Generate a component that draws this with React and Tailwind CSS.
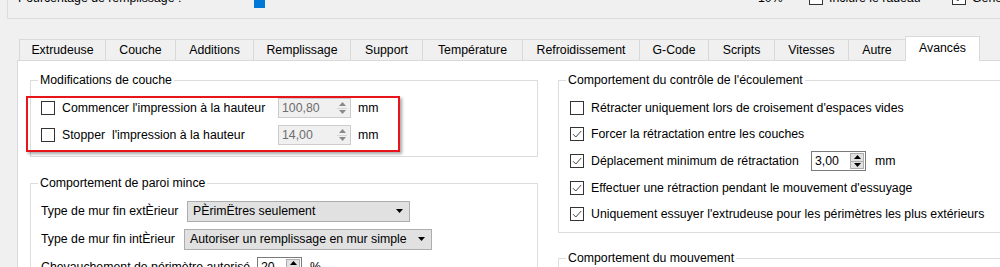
import React from "react";

function Check({ checked }) {
  return (
    <span className="w-[14px] h-[14px] border border-[#333333] bg-white flex items-center justify-center shrink-0">
      {checked && (
        <svg width="12" height="12" viewBox="0 0 12 12">
          <path d="M2 6.2 L4.8 9 L10.2 3" fill="none" stroke="#444444" strokeWidth="1" />
        </svg>
      )}
    </span>
  );
}

function Spin({ value, disabled, w }) {
  return (
    <div
      className={
        "h-[20px] flex border shrink-0 " +
        (disabled ? "border-[#cccccc] bg-[#f0f0f0] text-[#6d6d6d]" : "border-[#7a7a7a] bg-white text-black")
      }
      style={{ width: w }}
    >
      <div className="flex-1 flex items-center pl-[3px] leading-none">{value}</div>
      <div className="w-[15px] flex flex-col py-[1px] pr-[1px]">
        <div className={"flex-1 flex items-center justify-center " + (disabled ? "" : "bg-[#e1e1e1] border border-[#adadad]")}>
          <svg width="7" height="4" viewBox="0 0 7 4">
            <path d="M0 4 L3.5 0 L7 4 Z" fill={disabled ? "#8a8a8a" : "#000000"} />
          </svg>
        </div>
        {disabled && <div className="h-px bg-[#d5d5d5] mx-[2px]" />}
        <div className={"flex-1 flex items-center justify-center " + (disabled ? "" : "bg-[#e1e1e1] border border-t-0 border-[#adadad]")}>
          <svg width="7" height="4" viewBox="0 0 7 4">
            <path d="M0 0 L7 0 L3.5 4 Z" fill={disabled ? "#8a8a8a" : "#000000"} />
          </svg>
        </div>
      </div>
    </div>
  );
}

function Drop({ text, w }) {
  return (
    <div
      className="h-[21px] flex items-center justify-between bg-[#e1e1e1] border border-[#adadad] pl-[5px] pr-[6px] shrink-0"
      style={{ width: w }}
    >
      <span>{text}</span>
      <svg width="7" height="4" viewBox="0 0 7 4">
        <path d="M0 0 L7 0 L3.5 4 Z" fill="#000000" />
      </svg>
    </div>
  );
}

function Group({ title, className, children }) {
  return (
    <div className={"relative shrink-0 border border-[#dcdcdc] " + className}>
      <span className="absolute -top-[8px] left-[7px] bg-white px-[2px] leading-[14px] whitespace-nowrap">{title}</span>
      {children}
    </div>
  );
}

const tabs = [
  ["Extrudeuse", 86],
  ["Couche", 70],
  ["Additions", 78],
  ["Remplissage", 97],
  ["Support", 72],
  ["Température", 100],
  ["Refroidissement", 117],
  ["G-Code", 69],
  ["Scripts", 66],
  ["Vitesses", 74],
  ["Autre", 57],
];

export default function App() {
  return (
    <div className="w-[1000px] h-[267px] overflow-hidden bg-[#f0f0f0] text-[12.3px] text-black font-['Liberation_Sans',Arial,sans-serif]">
      {/* top partial panel */}
      <div className="h-[19px] overflow-hidden">
        <div className="-mt-[20px] ml-[7px] h-[39px] border-l border-b border-[#dcdcdc] pt-[11px] pl-[10px]">
          <div className="h-[14px] flex items-center whitespace-nowrap">
            <span className="w-[236px] shrink-0">Pourcentage de remplissage :</span>
            <span className="w-[11px] h-[20px] bg-[#0078d7] shrink-0" />
            <span className="ml-[493px] w-[51px] shrink-0">10%</span>
            <Check />
            <span className="ml-[6px] w-[123px] shrink-0">Inclure le radeau</span>
            <Check checked />
            <span className="ml-[6px]">Générer</span>
          </div>
        </div>
      </div>

      {/* tabs */}
      <div className="mt-[17px] h-[24px] flex items-end pl-[19px] whitespace-nowrap">
        {tabs.map(([t, w]) => (
          <div
            key={t}
            className="h-[21px] -ml-px first:ml-0 border border-b-0 border-[#d9d9d9] flex items-center justify-center shrink-0"
            style={{ width: w + 1 }}
          >
            {t}
          </div>
        ))}
        <div className="relative z-10 h-[25px] w-[75px] shrink-0 -ml-px -mb-px bg-white border border-b-0 border-[#d9d9d9] flex items-center justify-center pb-[2px]">
          Avancés
        </div>
      </div>

      {/* pane */}
      <div className="relative ml-[17px] h-[207px] bg-white border-l border-t border-[#d9d9d9] flex gap-[20px] pl-[12px] pt-[19px] whitespace-nowrap">
        {/* left column */}
        <div className="w-[508px] shrink-0 flex flex-col">
          <Group title="Modifications de couche" className="pt-[16px] pb-[10px] pl-[10px]">
            <div className="flex flex-col gap-[5px]">
              <div className="h-[22px] flex items-center">
                <Check />
                <span className="ml-[7px] w-[216px] shrink-0">Commencer l'impression à la hauteur</span>
                <Spin value="100,80" disabled w={73} />
                <span className="ml-[7px]">mm</span>
              </div>
              <div className="h-[22px] flex items-center">
                <Check />
                <span className="ml-[7px] w-[216px] shrink-0 whitespace-pre">Stopper  l'impression à la hauteur</span>
                <Spin value="14,00" disabled w={73} />
                <span className="ml-[7px]">mm</span>
              </div>
            </div>
          </Group>

          <Group title="Comportement de paroi mince" className="mt-[26px] pt-[16px] pl-[10px] h-[120px]">
            <div className="flex flex-col gap-[6px]">
              <div className="h-[22px] flex items-center">
                <span className="w-[146px] shrink-0">Type de mur fin extÈrieur</span>
                <Drop text="PÈrimËtres seulement" w={223} />
              </div>
              <div className="h-[22px] flex items-center">
                <span className="w-[143px] shrink-0">Type de mur fin intÈrieur</span>
                <Drop text="Autoriser un remplissage en mur simple" w={248} />
              </div>
              <div className="h-[22px] flex items-center">
                <span className="w-[216px] shrink-0">Chevauchement de périmètre autorisé</span>
                <Spin value="20" w={45} />
                <span className="ml-[8px]">%</span>
              </div>
            </div>
          </Group>
        </div>

        {/* right column */}
        <div className="flex-1 flex flex-col">
          <Group title="Comportement du contrôle de l'écoulement" className="pt-[17px] pl-[11px] h-[153px] -mr-[40px]">
            <div className="flex flex-col">
              <div className="h-[20px] flex items-center">
                <Check />
                <span className="ml-[7px]">Rétracter uniquement lors de croisement d'espaces vides</span>
              </div>
              <div className="h-[20px] mt-[6px] flex items-center">
                <Check checked />
                <span className="ml-[7px]">Forcer la rétractation entre les couches</span>
              </div>
              <div className="h-[22px] mt-[6px] flex items-center">
                <Check checked />
                <span className="ml-[7px] w-[220px] shrink-0">Déplacement minimum de rétractation</span>
                <Spin value="3,00" w={55} />
                <span className="ml-[9px]">mm</span>
              </div>
              <div className="h-[20px] mt-[6px] flex items-center">
                <Check checked />
                <span className="ml-[7px]">Effectuer une rétraction pendant le mouvement d'essuyage</span>
              </div>
              <div className="h-[20px] mt-[6px] flex items-center">
                <Check checked />
                <span className="ml-[7px]">Uniquement essuyer l'extrudeuse pour les périmètres les plus extérieurs</span>
              </div>
            </div>
          </Group>
          <Group title="Comportement du mouvement" className="mt-[25px] h-[40px] -mr-[40px]" />
        </div>

        {/* red annotation */}
        <div className="absolute left-[8px] top-[35px] w-[374px] h-[56px] border-2 border-[#e8141b] shadow-[2px_2px_3px_rgba(0,0,0,0.35)]" />
      </div>
    </div>
  );
}
